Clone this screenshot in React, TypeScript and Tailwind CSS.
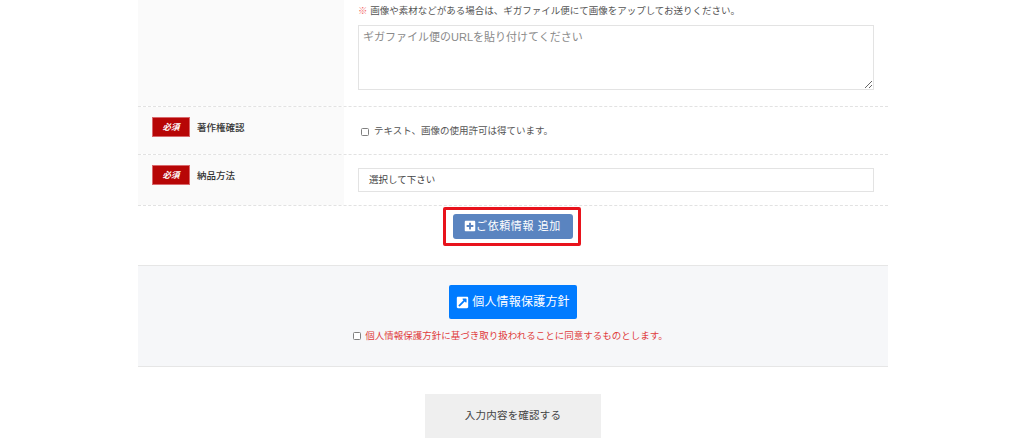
import { FaExternalLinkSquareAlt, FaPlusSquare } from 'react-icons/fa'

const FONT = "font-['Liberation_Sans','Noto_Sans_CJK_JP',sans-serif]"

function RequiredBadge() {
  return (
    <span className="flex h-[20px] w-[38px] shrink-0 items-center justify-center border border-[#d9686c] bg-[#b70606] text-[8.5px] font-bold italic text-white">
      必須
    </span>
  )
}

function RowLabel({ label }: { label: string }) {
  return (
    <div className="flex w-[206px] shrink-0 items-start gap-[7px] bg-[#fafafa] pl-[14px] pt-[10px]">
      <RequiredBadge />
      <span className="pt-[2px] text-[9.5px] font-medium leading-[18px] text-[#333]">{label}</span>
    </div>
  )
}

export default function App() {
  return (
    <div className={`${FONT} h-[439px] w-[1024px] overflow-hidden bg-white`}>
      <div className="ml-[138px] w-[750px]">
        {/* form table */}
        <div className="flex h-[107px] border-b border-dashed border-[#e2e2e2]">
          <div className="w-[206px] shrink-0 bg-[#fafafa]" />
          <div className="flex-1 pl-[14px] pr-[14px]">
            <p className="h-[25px] pt-[4px] text-[9.5px] leading-[14px] text-[#555]">
              <span className="text-[#f36b6b]">※</span> 画像や素材などがある場合は、ギガファイル便にて画像をアップしてお送りください。
            </p>
            <textarea
              readOnly
              placeholder="ギガファイル便のURLを貼り付けてください"
              className="block h-[65px] w-[516px] border border-[#e3e3e3] px-[4px] py-[2px] text-[11px] leading-[18px] placeholder:text-[#8a8a8a]"
            />
          </div>
        </div>
        <div className="flex h-[48px] border-b border-dashed border-[#e2e2e2]">
          <RowLabel label="著作権確認" />
          <div className="flex flex-1 items-center gap-[5px] pl-[17px] pt-[2px]">
            <span className="h-[8px] w-[8px] rounded-[1.5px] border border-[#808080] bg-white" />
            <span className="text-[9.5px] text-[#555]">テキスト、画像の使用許可は得ています。</span>
          </div>
        </div>
        <div className="flex h-[51px] border-b border-dashed border-[#e2e2e2]">
          <RowLabel label="納品方法" />
          <div className="flex-1 pl-[14px] pt-[13px]">
            <div className="flex h-[24px] w-[516px] items-center border border-[#e3e3e3] pl-[10px] pt-[1px] text-[9.5px] text-[#444]">
              選択して下さい
            </div>
          </div>
        </div>

        {/* add request button */}
        <div className="flex h-[59px] justify-center pr-[2px] pt-[1px]">
          <div className="h-[39px] rounded-[2px] border-[3px] border-[#e8131c] bg-white pl-[7px] pr-[5px] pt-[4px]">
            <button className="flex h-[25px] w-[120px] items-center justify-center gap-0 rounded-[3px] bg-[#5a84c0] pb-[1px] pr-[1px] text-[11px] tracking-[0.6px] text-white">
              <FaPlusSquare className="text-[12px]" />
              ご依頼情報 追加
            </button>
          </div>
        </div>

        {/* privacy */}
        <div className="h-[102px] border-y border-[#e6e6e6] bg-[#f6f7f9] pt-[19px]">
          <button className="mx-auto flex h-[34px] w-[128px] items-center justify-center gap-[3px] rounded-[2px] bg-[#007bff] text-[12px] tracking-[0.2px] text-white">
            <FaExternalLinkSquareAlt className="text-[13px]" />
            個人情報保護方針
          </button>
          <div className="mt-[10px] flex items-center justify-center gap-[4px] pr-[5px]">
            <span className="h-[8px] w-[8px] rounded-[1.5px] border border-[#808080] bg-white" />
            <span className="text-[9.5px] text-[#e03c3c]">個人情報保護方針に基づき取り扱われることに同意するものとします。</span>
          </div>
        </div>

        {/* confirm */}
        <div className="flex justify-center pt-[27px]">
          <button className="h-[44px] w-[176px] bg-[#efefef] text-[10.5px] tracking-[0.2px] text-[#444]">
            入力内容を確認する
          </button>
        </div>
      </div>
    </div>
  )
}
